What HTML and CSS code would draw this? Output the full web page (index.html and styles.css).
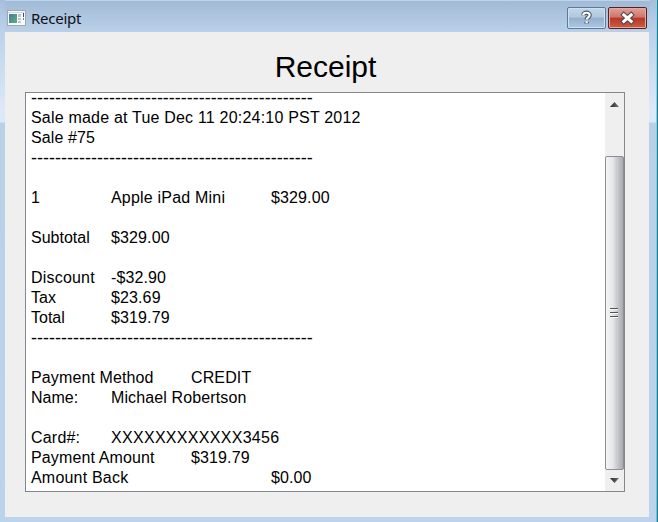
FILE: index.html
```html
<!DOCTYPE html>
<html lang="en">
<head>
<meta charset="utf-8">
<title>Receipt</title>
<link rel="stylesheet" href="styles.css">
</head>
<body>
<div class="window">
  <header class="titlebar">
    <svg class="app-icon" width="19" height="17" viewBox="0 0 19 17">
      <defs><linearGradient id="pane" x1="0" y1="0" x2="1" y2="1"><stop offset="0" stop-color="#4a78a0"/><stop offset="1" stop-color="#58b478"/></linearGradient></defs>
      <rect x=".5" y=".5" width="18" height="15" fill="#f8f9fa" stroke="#9ba8b5"/>
      <path d="M1 2.5H17" stroke="#cfd8df"/>
      <rect x="2" y="4" width="8" height="9" fill="url(#pane)"/>
      <path d="M11 4h3v3h-3zM11 8h3v2h-3zM11 11h3v2h-3z" fill="#bec6c6"/>
      <path d="M16.5 3v4" stroke="#34506a"/><path d="M16.5 8v2" stroke="#6d8192"/>
    </svg>
    <span class="caption">Receipt</span>
    <div class="controls">
      <button class="control help" aria-label="Help">
        <svg width="37" height="20" viewBox="0 0 37 20"><path d="M15.5 7.2C15.6 3.9 21.6 3.9 21.6 7.3C21.6 9.5 18.7 9.3 18.7 11.6M18.7 13.7v1.8" fill="none" stroke="#4d5666" stroke-width="4.4"/><path d="M15.2 7.2C15.6 3.9 21.6 3.9 21.6 7.3C21.6 9.5 18.7 9.3 18.7 11.6M18.7 13.3v2" fill="none" stroke="#fff" stroke-width="2.2"/></svg>
      </button>
      <button class="control close" aria-label="Close">
        <svg width="37" height="20" viewBox="0 0 37 20"><path d="M14.8 6.8l7.4 6.6M22.2 6.8l-7.4 6.6" stroke="#55424d" stroke-width="5" stroke-linecap="square"/><path d="M14.8 6.8l7.4 6.6M22.2 6.8l-7.4 6.6" stroke="#fff" stroke-width="3" stroke-linecap="square"/></svg>
      </button>
    </div>
  </header>
  <main class="client">
    <h1 class="heading">Receipt</h1>
    <div class="viewer">
      <pre class="receipt"><span class="rule">-----------------------------------------------</span>
<span class="stamp">Sale made at Tue Dec 11 20:24:10 PST 2012</span>
<span class="text">Sale #75</span>
<span class="rule">-----------------------------------------------</span>

1&#9;<span class="stamp">Apple iPad Mini</span>&#9;<span class="text">$329.00</span>

Subtotal&#9;<span class="text">$329.00</span>

<span class="stamp">Discount</span>&#9;<span class="text">-$32.90</span>
Tax&#9;<span class="text">$23.69</span>
Total&#9;<span class="text">$319.79</span>
<span class="rule">-----------------------------------------------</span>

<span class="text">Payment Method</span>&#9;<span class="text">CREDIT</span>
Name:&#9;<span class="text">Michael Robertson</span>

<span class="stamp">Card#:</span>&#9;<span class="card">XXXXXXXXXXXX3456</span>
<span class="text">Payment Amount</span>&#9;<span class="text">$319.79</span>
<span class="stamp">Amount Back</span>&#9;&#9;<span class="text">$0.00</span></pre>
      <div class="scrollbar">
        <div class="arrow up"><svg width="9" height="5" viewBox="0 0 9 5"><path d="M4.5 0L9 5H0z" fill="url(#ink)"/><defs><linearGradient id="ink"><stop offset="0" stop-color="#222"/><stop offset="1" stop-color="#777"/></linearGradient></defs></svg></div>
        <div class="thumb"><span class="grip"></span></div>
        <div class="arrow down"><svg width="9" height="5" viewBox="0 0 9 5"><path d="M0 0h9L4.5 5z" fill="url(#ink)"/></svg></div>
      </div>
    </div>
  </main>
</div>
</body>
</html>
```
FILE: styles.css
```css
* { box-sizing: border-box; }
body { margin: 0; overflow: hidden; }
.window {
  width: 658px;
  height: 522px;
  padding: 0 7px 5px 5px;
  border-right: 1px solid #237d91;
  background:
    linear-gradient(#8fd3e8, #6fc0dc) 656px 0 / 1px 100% no-repeat,
    linear-gradient(#a1bad5, #bad0e9) 5px 0 / 645px 32px no-repeat,
    linear-gradient(#a5bfdb 0, #bcd2eb 32px, #dce9f8 110px, #dce9f8 122px, #b9d1e7 123px, #bcd3ec 100%);
}
.titlebar {
  display: flex;
  height: 32px;
  padding: 7px 3px 0 2px;
  box-shadow: inset 0 1px #b9d4ec;
}
.app-icon { display: block; margin-top: 3px; }
.caption {
  flex: 1;
  margin-left: 5px;
  font: 15px/23px "Noto Sans", sans-serif;
  letter-spacing: -.25px;
  color: #0b1019;
}
.controls { display: flex; gap: 2px; }
.control {
  width: 39px;
  height: 22px;
  padding: 0;
  border: 1px solid #627895;
  border-radius: 2px;
}
.control svg { display: block; }
.help {
  background: linear-gradient(#c2d6eb, #b2c8df 46%, #94afcc 50%, #aac9e4);
  box-shadow: inset 0 0 0 1px #d1e0ef;
}
.close {
  border-color: #51222c;
  background: linear-gradient(#e0a199, #cf7568 46%, #b83626 50%, #cc5e42);
  box-shadow: inset 0 0 0 1px #e6aaa1;
}
.client {
  width: 644px;
  height: 485px;
  padding: 15px 19px 25px 20px;
  background: #efefef;
  color: #000;
  font-family: "Liberation Sans", Arial, sans-serif;
}
.heading {
  margin: 0 0 5px;
  padding-right: 4px;
  font-size: 30px;
  font-weight: 400;
  line-height: 40px;
  text-align: center;
}
.viewer {
  display: flex;
  height: 400px;
  width: 600px;
  border: 1px solid #828790;
  background: #fff;
  overflow: hidden;
}
.receipt {
  flex: 1;
  margin: -5px 0 0 5px;
  font: 16px/20px "Liberation Sans", Arial, sans-serif;
  tab-size: 80px;
}
.rule { font-size: 18px; line-height: 0; vertical-align: -1px; }
.text { letter-spacing: .12px; }
.stamp { letter-spacing: .2px; }
.card { letter-spacing: .3px; }
.scrollbar {
  display: flex;
  flex-direction: column;
  width: 19px;
  background: #efefef;
}
.arrow { display: flex; justify-content: center; }
.up { height: 63px; padding-top: 9px; }
.down { height: 21px; padding-top: 8px; }
.thumb {
  display: grid;
  place-items: center;
  flex: 1;
  border: 1px solid #8e8e93;
  border-radius: 2px;
  background: linear-gradient(90deg, #f5f5f5, #e6e7ea 40%, #cfd0d5 60%, #a9aaaf);
}
.grip {
  width: 8px;
  height: 10px;
  margin-right: 2px;
  background: repeating-linear-gradient(#555 0 1px, #f5f5f5 1px 2px, transparent 2px 4px);
}
```
